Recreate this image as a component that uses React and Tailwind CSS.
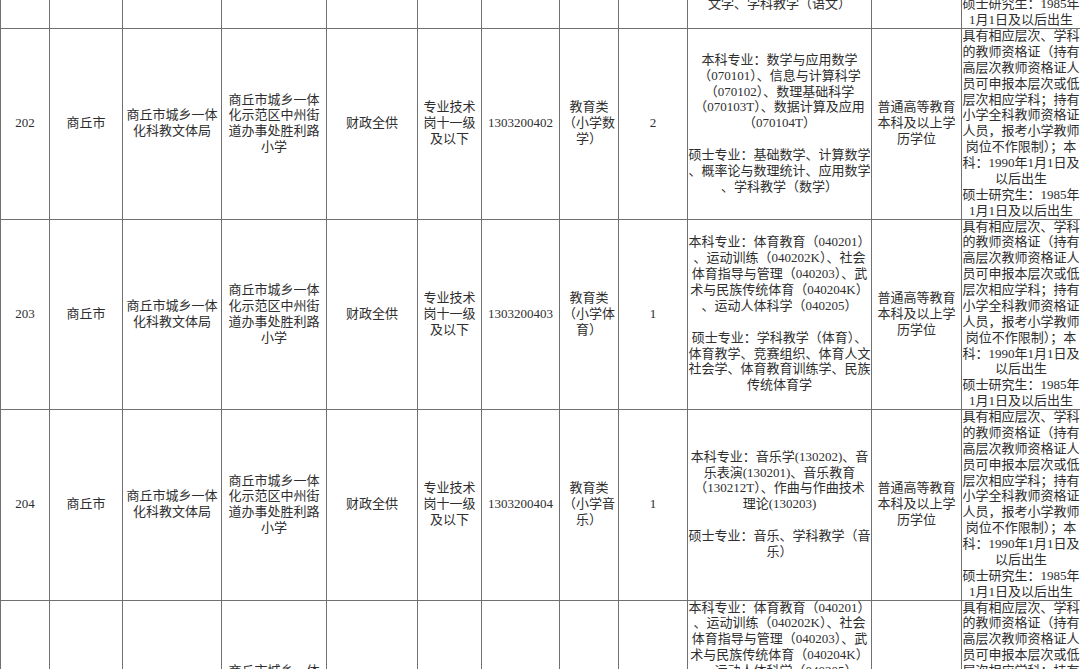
import React from "react";

const lastCol = [
  "具有相应层次、学科",
  "的教师资格证（持有",
  "高层次教师资格证人",
  "员可申报本层次或低",
  "层次相应学科；持有",
  "小学全科教师资格证",
  "人员，报考小学教师",
  "岗位不作限制）；本",
  "科：1990年1月1日及",
  "以后出生",
  "硕士研究生：1985年",
  "1月1日及以后出生",
];

const school = ["商丘市城乡一体", "化示范区中州街", "道办事处胜利路", "小学"];
const dept = ["商丘市城乡一体", "化科教文体局"];
const rank = ["专业技术", "岗十一级", "及以下"];
const edu = ["普通高等教育", "本科及以上学", "历学位"];

const rows = [
  {
    no: "201",
    code: "1303200401",
    post: ["教育类", "（小学语", "文）"],
    count: "2",
    major: [
      "本科专业：汉语言文学",
      "（050101）、汉语言（050102）",
      "、汉语国际教育（050103）、",
      "秘书学（050107T）、小学教育",
      "（040107）",
      "",
      "硕士专业：语言学及应用语言学",
      "、汉语言文字学、中国古典文献",
      "学、中国古代文学、中国现当代",
      "文学、学科教学（语文）",
    ],
  },
  {
    no: "202",
    code: "1303200402",
    post: ["教育类", "（小学数", "学）"],
    count: "2",
    major: [
      "本科专业：数学与应用数学",
      "（070101）、信息与计算科学",
      "（070102）、数理基础科学",
      "（070103T）、数据计算及应用",
      "（070104T）",
      "",
      "硕士专业：基础数学、计算数学",
      "、概率论与数理统计、应用数学",
      "、学科教学（数学）",
    ],
  },
  {
    no: "203",
    code: "1303200403",
    post: ["教育类", "（小学体", "育）"],
    count: "1",
    major: [
      "本科专业：体育教育（040201）",
      "、运动训练（040202K）、社会",
      "体育指导与管理（040203）、武",
      "术与民族传统体育（040204K）",
      "、运动人体科学（040205）",
      "",
      "硕士专业：学科教学（体育）、",
      "体育教学、竞赛组织、体育人文",
      "社会学、体育教育训练学、民族",
      "传统体育学",
    ],
  },
  {
    no: "204",
    code: "1303200404",
    post: ["教育类", "（小学音", "乐）"],
    count: "1",
    major: [
      "本科专业：音乐学(130202)、音",
      "乐表演(130201)、音乐教育",
      "（130212T）、作曲与作曲技术",
      "理论(130203)",
      "",
      "硕士专业：音乐、学科教学（音",
      "乐）",
    ],
  },
  {
    no: "205",
    code: "1303200405",
    post: ["教育类", "（小学体", "育）"],
    count: "1",
    major: [
      "本科专业：体育教育（040201）",
      "、运动训练（040202K）、社会",
      "体育指导与管理（040203）、武",
      "术与民族传统体育（040204K）",
      "、运动人体科学（040205）",
      "",
      "硕士专业：学科教学（体育）、",
      "体育教学、竞赛组织、体育人文",
      "社会学、体育教育训练学、民族",
      "传统体育学、运动人体科学、运",
      "动训练、运动康复、体育管理",
      "学",
    ],
  },
];

function Lines({ lines }) {
  return (
    <div className="flex flex-col items-center">
      {lines.map((l, i) =>
        l === "" ? (
          <div key={i} className="h-[15.875px]" />
        ) : (
          <div key={i} className="whitespace-nowrap">
            {l}
          </div>
        )
      )}
    </div>
  );
}

function Cell({ children, first }) {
  return (
    <div
      className={
        "flex items-center justify-center text-center border-r border-b border-[#707070] overflow-visible " +
        (first ? "border-l" : "")
      }
    >
      {children}
    </div>
  );
}

export default function App() {
  return (
    <div className="w-[1080px] h-[669px] overflow-hidden bg-white">
      <div className="-mt-[162.5px] w-[1081px] font-['Liberation_Serif','Noto_Sans_CJK_SC',serif] text-[13px] leading-[15.875px] text-[#2e2e2e]">
        {rows.map((r) => (
          <div
            key={r.no}
            className="grid h-[190.5px] grid-cols-[50px_73px_99px_105px_91px_64px_78px_59px_69px_184px_90px_119px]"
          >
            <Cell first>{r.no}</Cell>
            <Cell>商丘市</Cell>
            <Cell>
              <Lines lines={dept} />
            </Cell>
            <Cell>
              <Lines lines={school} />
            </Cell>
            <Cell>财政全供</Cell>
            <Cell>
              <Lines lines={rank} />
            </Cell>
            <Cell>{r.code}</Cell>
            <Cell>
              <Lines lines={r.post} />
            </Cell>
            <Cell>{r.count}</Cell>
            <Cell>
              <Lines lines={r.major} />
            </Cell>
            <Cell>
              <Lines lines={edu} />
            </Cell>
            <Cell>
              <Lines lines={lastCol} />
            </Cell>
          </div>
        ))}
      </div>
    </div>
  );
}
